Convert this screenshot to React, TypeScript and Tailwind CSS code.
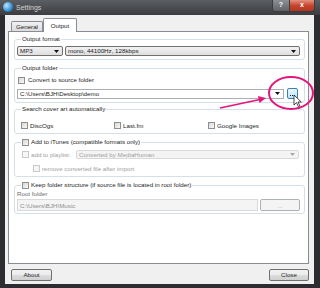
import type { ReactNode } from 'react'

const FONT = "font-['Liberation_Sans',Arial,sans-serif]"

function Check({ disabled = false }: { disabled?: boolean }) {
  return disabled ? (
    <span className="inline-block w-[7px] h-[7px] shrink-0 border border-[#cacaca] bg-[#f6f6f6]" />
  ) : (
    <span className="inline-block w-[7px] h-[7px] shrink-0 border border-[#8e8f8f] bg-[linear-gradient(135deg,#d6d6d6,#fafafa)]" />
  )
}

function Arrow({ disabled = false }: { disabled?: boolean }) {
  return (
    <svg width="5" height="3" viewBox="0 0 5 3" className="shrink-0">
      <path d="M0 0h5L2.5 3z" fill={disabled ? '#a8a8a8' : '#111'} />
    </svg>
  )
}

function Group({ legend, className, children }: { legend: ReactNode; className: string; children: ReactNode }) {
  return (
    <fieldset className={`border border-[#d5dfe5] rounded-[3px] pl-[2px] pr-[4px] ${className}`}>
      <legend className="ml-[4px] px-[1px] leading-[8px]">{legend}</legend>
      {children}
    </fieldset>
  )
}

function Button({ label, className }: { label: string; className: string }) {
  return (
    <div
      className={`h-[12px] flex items-center justify-center rounded-[2px] border border-[#707070] bg-[linear-gradient(to_bottom,#f2f2f2_0%,#ebebeb_50%,#dddddd_51%,#cfcfcf_100%)] ${className}`}
    >
      {label}
    </div>
  )
}

export default function App() {
  return (
    <div className={`relative w-[320px] h-[288px] overflow-hidden bg-[#2b2d30] flex flex-col text-[6.2px] text-[#1e1e1e] ${FONT}`}>
      {/* title bar */}
      <div className="h-[15px] shrink-0 flex items-start bg-[linear-gradient(to_bottom,#5b5e62,#3b3d40)]">
        <span className="mt-[2px] ml-[3px] w-[10px] h-[10px] rounded-full bg-[radial-gradient(circle_at_35%_35%,#bfe6ff,#2f8fd6_60%,#17558c)]" />
        <span className="ml-[3px] mt-[3px] text-[7px] leading-[9px] text-[#d6d6d6]">Settings</span>
        <div className="ml-auto mr-[5px] flex">
          <div className="w-[18px] h-[12px] rounded-bl-[3px] border border-[#3c3c3c] border-t-0 bg-[linear-gradient(to_bottom,#8d9094,#5f6266)] flex items-center justify-center text-white text-[7px] font-bold">
            ?
          </div>
          <div className="w-[25px] h-[12px] rounded-br-[3px] border border-[#3c3c3c] border-t-0 border-l-0 bg-[linear-gradient(to_bottom,#e4907f,#c6452f_50%,#b33420)] flex items-center justify-center text-white text-[7px] font-bold">
            x
          </div>
        </div>
      </div>

      {/* body */}
      <div className="flex-1 flex pl-[5px] pr-[8px] pb-[4px]">
        <div className="flex-1 flex flex-col bg-[#f0f0f0] pl-[3px] pr-[5px]">
          {/* tabs */}
          <div className="h-[16px] flex items-end ml-[3px] pt-[3px]">
            <div className="w-[32px] h-[10px] border border-[#898c95] border-b-0 rounded-t-[2px] bg-[linear-gradient(to_bottom,#f2f2f2,#dcdcdc)] flex items-center justify-center">
              General
            </div>
            <div className="w-[34px] h-[14px] -mb-[1px] relative z-10 border border-[#898c95] border-b-0 rounded-t-[2px] bg-white flex items-center justify-center">
              Output
            </div>
          </div>

          {/* panel */}
          <div className="h-[233px] border border-[#898c95] bg-white pl-[5px] pr-[3px] pt-[3px] flex flex-col">
            <Group legend="Output format" className="pb-[3px]">
              <div className="mt-[3px] flex gap-[2px]">
                <div className="w-[46px] h-[10px] border border-[#707070] rounded-[2px] bg-[linear-gradient(to_bottom,#f2f2f2,#dedede)] flex items-center pl-[2px] pr-[3px]">
                  <span className="flex-1">MP3</span>
                  <Arrow />
                </div>
                <div className="flex-1 h-[10px] border border-[#707070] rounded-[2px] bg-[linear-gradient(to_bottom,#f2f2f2,#dedede)] flex items-center pl-[2px] pr-[3px]">
                  <span className="flex-1">mono, 44100Hz, 128kbps</span>
                  <Arrow />
                </div>
              </div>
            </Group>

            <Group legend="Output folder" className="mt-[4px] pb-[3px]">
              <div className="mt-[4px] h-[8px] flex items-center gap-[3px] pl-[1px]">
                <Check />
                <span>Convert to source folder</span>
              </div>
              <div className="mt-[4px] flex items-center gap-[3px]">
                <div className="w-[267px] h-[10px] border border-[#abadb3] bg-white flex items-center pl-[2px] pr-[3px]">
                  <span className="flex-1">C:\Users\BJH\Desktop\demo</span>
                  <Arrow />
                </div>
                <div className="w-[11px] h-[11px] rounded-[2px] border border-[#3c7fb1] bg-[linear-gradient(to_bottom,#eaf6fd,#bee6fd)] flex items-center justify-center gap-[1px] pt-[3px]">
                  <span className="w-[1px] h-[1px] bg-[#1e1e1e]" />
                  <span className="w-[1px] h-[1px] bg-[#1e1e1e]" />
                  <span className="w-[1px] h-[1px] bg-[#1e1e1e]" />
                </div>
              </div>
            </Group>

            <Group legend="Search cover art automatically" className="mt-[2px] pb-[4px]">
              <div className="mt-[8px] h-[8px] grid grid-cols-[93px_94px_1fr] items-center pl-[4px]">
                <div className="flex items-center gap-[2px]">
                  <Check />
                  <span>DiscOgs</span>
                </div>
                <div className="flex items-center gap-[2px]">
                  <Check />
                  <span>Last.fm</span>
                </div>
                <div className="flex items-center gap-[2px]">
                  <Check />
                  <span>Google Images</span>
                </div>
              </div>
            </Group>

            <Group
              legend={
                <span className="flex items-center gap-[2px]">
                  <Check />
                  Add to iTunes (compatible formats only)
                </span>
              }
              className="mt-[4px] pb-[4px]"
            >
              <div className="mt-[4px] flex items-center pl-[5px]">
                <Check disabled />
                <span className="ml-[2px] w-[45px] text-[#a0a0a0]">add to playlist:</span>
                <div className="flex-1 mr-[1px] h-[9px] border border-[#d9d9d9] rounded-[2px] bg-[#f4f4f4] flex items-center pl-[2px] pr-[3px]">
                  <span className="flex-1 text-[#a0a0a0]">Converted by MediaHuman</span>
                  <Arrow disabled />
                </div>
              </div>
              <div className="mt-[5px] h-[8px] flex items-center gap-[2px] pl-[16px]">
                <Check disabled />
                <span className="text-[#a0a0a0]">remove converted file after import</span>
              </div>
            </Group>

            <Group
              legend={
                <span className="flex items-center gap-[2px]">
                  <Check />
                  Keep folder structure (if source file is located in root folder)
                </span>
              }
              className="mt-[4px] pb-[2px]"
            >
              <div className="h-[8px] flex items-center text-[#6d6d6d]">Root folder</div>
              <div className="mt-[2px] flex gap-[2px]">
                <div className="w-[241px] h-[12px] border border-[#d9d9d9] bg-[#f4f4f4] flex items-center pl-[2px] text-[#8d8d8d]">
                  C:\Users\BJH\Music
                </div>
                <div className="w-[40px] h-[12px] rounded-[2px] border border-[#adb2b5] bg-[#f4f4f4] flex items-center justify-center text-[#a0a0a0]">
                  ...
                </div>
              </div>
            </Group>
          </div>

          {/* footer */}
          <div className="mt-[5px] flex justify-between pl-[3px]">
            <Button label="About" className="w-[41px]" />
            <Button label="Close" className="w-[40px]" />
          </div>
        </div>
      </div>

      {/* annotation */}
      <svg className="absolute inset-0 pointer-events-none" width="320" height="288" viewBox="0 0 320 288">
        <ellipse cx="291" cy="93" rx="22" ry="16" fill="none" stroke="#e3167c" strokeWidth="2" />
        <line x1="220" y1="108" x2="260" y2="99.5" stroke="#e3167c" strokeWidth="1.6" />
        <path d="M266 98 L258 96 L259.5 103 Z" fill="#e3167c" />
        <path
          d="M294 95 L294 105 L296.5 102.6 L298.4 106.6 L299.9 105.9 L298 102 L301.3 102 Z"
          fill="#fff"
          stroke="#000"
          strokeWidth="0.7"
          strokeLinejoin="round"
        />
      </svg>
    </div>
  )
}
